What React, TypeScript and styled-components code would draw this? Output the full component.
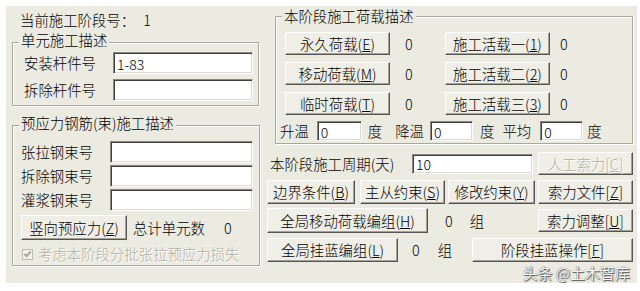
import React from "react";
import styled, { createGlobalStyle } from "styled-components";

const FACE = "#ecebe2";
const FONT = `"Noto Sans CJK SC", "Noto Sans", sans-serif`;

const GlobalStyle = createGlobalStyle`
  html, body {
    margin: 0;
    padding: 0;
    background: #fff;
  }
`;

const Dialog = styled.div`
  margin: 6px 3px 0 6px;
  width: 631px;
  height: 277px;
  background: ${FACE};
  display: flex;
  font-family: ${FONT};
  font-size: 14.4px;
  font-weight: 300;
  line-height: 16px;
  color: #000;
`;

const LeftCol = styled.div`
  width: 248px;
  margin-left: 6px;
  padding-top: 6px;
  display: flex;
  flex-direction: column;
`;

const RightCol = styled.div`
  width: 367px;
  margin-left: 6px;
  padding-top: 2px;
  display: flex;
  flex-direction: column;
`;

const StageLine = styled.div`
  height: 16px;
  margin-left: 8px;
  white-space: nowrap;
`;

const Group = styled.fieldset<{ $mt: number; $w: number; $ml?: number }>`
  box-sizing: border-box;
  width: ${(p) => p.$w}px;
  margin: ${(p) => p.$mt}px 0 0 ${(p) => p.$ml ?? 0}px;
  padding: 0;
  min-width: 0;
  border: 1px solid #aaa899;
  box-shadow: inset 1px 1px 0 #fff, 1px 1px 0 #fff;
`;

const Caption = styled.legend<{ $ml: number; $lift?: number }>`
  margin-left: ${(p) => p.$ml}px;
  padding: 0 2px ${(p) => p.$lift ?? 0}px;
  line-height: 16px;
  background: ${FACE};
  white-space: nowrap;
`;

const GroupBody = styled.div<{ $pad: string }>`
  padding: ${(p) => p.$pad};
  display: flex;
  flex-direction: column;
`;

const FieldRow = styled.div<{ $mt?: number }>`
  display: flex;
  align-items: center;
  height: 22px;
  margin-top: ${(p) => p.$mt ?? 0}px;
`;

const FieldLabel = styled.span<{ $w?: number }>`
  width: ${(p) => p.$w ?? 89}px;
  flex: none;
  white-space: nowrap;
`;

const TextBox = styled.input<{ $w: number; $h?: number; $ml?: number }>`
  box-sizing: border-box;
  width: ${(p) => p.$w}px;
  height: ${(p) => p.$h ?? 22}px;
  flex: none;
  margin: 0 0 0 ${(p) => p.$ml ?? 0}px;
  padding: 1px 3px 0;
  font-family: ${FONT};
  font-size: 14px;
  font-weight: 300;
  color: #000;
  background: #fff;
  border: 1px solid;
  border-color: #8a887c #fff #fff #8a887c;
  box-shadow: inset 1px 1px 0 #404040, inset -1px -1px 0 #dcdad0;
  outline: none;
`;

const Btn = styled.button<{ $w: number; $h?: number; $ml?: number | "auto" }>`
  box-sizing: border-box;
  width: ${(p) => p.$w}px;
  height: ${(p) => p.$h ?? 23}px;
  flex: none;
  margin: 0 0 0 ${(p) => (p.$ml === "auto" ? "auto" : `${p.$ml ?? 0}px`)};
  padding: 0;
  font-family: ${FONT};
  font-size: 14.4px;
  font-weight: 300;
  line-height: 16px;
  color: #000;
  background: #efeee7;
  border: 1px solid;
  border-color: #fff #555 #555 #fff;
  box-shadow: inset -1px -1px 0 #a3a194;
  white-space: nowrap;
  cursor: default;

  &:disabled {
    color: #b2b0a2;
    text-shadow: 1px 1px 0 #fff;
  }
`;

const Word = styled.span<{ $ml?: number; $gray?: boolean }>`
  margin-left: ${(p) => p.$ml ?? 0}px;
  flex: none;
  white-space: nowrap;
  color: ${(p) => (p.$gray ? "#b2b0a2" : "#000")};
  text-shadow: ${(p) => (p.$gray ? "1px 1px 0 #fff" : "none")};
`;

const ActionRow = styled.div<{ $mt: number; $h?: number; $ml?: number }>`
  display: flex;
  align-items: center;
  height: ${(p) => p.$h ?? 24}px;
  margin-top: ${(p) => p.$mt}px;
  margin-left: ${(p) => p.$ml ?? 0}px;
`;

const LoadGrid = styled.div`
  display: grid;
  grid-template-columns: 105px 55px 105px auto;
  grid-auto-rows: 23px;
  row-gap: 7px;
  align-items: center;
  margin-left: 5px;
`;

const Count = styled.span<{ $pl: number }>`
  padding-left: ${(p) => p.$pl}px;
`;

const CheckBox = styled.span`
  box-sizing: border-box;
  width: 11px;
  height: 11px;
  margin-left: 1px;
  flex: none;
  display: flex;
  border: 1px solid #bdbbad;
  background: #f3f2ec;
`;

const Watermark = styled.div`
  margin-top: 3px;
  padding-right: 3px;
  text-align: right;
  font-size: 15px;
  font-weight: 400;
  line-height: 16px;
  color: #f6f6f6;
  text-shadow: 0 0 1px #444, 1px 1px 1px #555;
  white-space: nowrap;
`;

const Key = ({ k, square }: { k: string; square?: boolean }) => (
  <>
    {square ? "[" : "("}
    <u>{k}</u>
    {square ? "]" : ")"}
  </>
);

const App = () => {
  return (
    <>
      <GlobalStyle />
      <Dialog>
        <LeftCol>
          <StageLine>
            当前施工阶段号：<Word $ml={8}>1</Word>
          </StageLine>

          <Group $mt={4} $w={247}>
            <Caption $ml={6} $lift={4}>
              单元施工描述
            </Caption>
            <GroupBody $pad="0 4px 4px 11px">
              <FieldRow>
                <FieldLabel>安装杆件号</FieldLabel>
                <TextBox $w={140} defaultValue="1-83" />
              </FieldRow>
              <FieldRow $mt={5}>
                <FieldLabel>拆除杆件号</FieldLabel>
                <TextBox $w={140} defaultValue="" />
              </FieldRow>
            </GroupBody>
          </Group>

          <Group $mt={9} $w={248}>
            <Caption $ml={6} $lift={4}>
              预应力钢筋(束)施工描述
            </Caption>
            <GroupBody $pad="6px 4px 4px 8px">
              <FieldRow>
                <FieldLabel>张拉钢束号</FieldLabel>
                <TextBox $w={143} defaultValue="" />
              </FieldRow>
              <FieldRow $mt={2}>
                <FieldLabel>拆除钢束号</FieldLabel>
                <TextBox $w={143} defaultValue="" />
              </FieldRow>
              <FieldRow $mt={2}>
                <FieldLabel>灌浆钢束号</FieldLabel>
                <TextBox $w={143} defaultValue="" />
              </FieldRow>
              <ActionRow $mt={4} $h={25}>
                <Btn $w={106} $h={25}>
                  竖向预应力<Key k="Z" />
                </Btn>
                <Word $ml={6}>总计单元数</Word>
                <Word $ml={19}>0</Word>
              </ActionRow>
              <ActionRow $mt={7} $h={14}>
                <CheckBox>
                  <svg width="9" height="9" viewBox="0 0 9 9">
                    <path
                      d="M1.5 4 L3.5 6.2 L7.8 1.5"
                      fill="none"
                      stroke="#a9a797"
                      strokeWidth="2"
                    />
                  </svg>
                </CheckBox>
                <Word $ml={5} $gray>
                  考虑本阶段分批张拉预应力损失
                </Word>
              </ActionRow>
            </GroupBody>
          </Group>
        </LeftCol>

        <RightCol>
          <Group $mt={0} $w={358} $ml={9}>
            <Caption $ml={6}>本阶段施工荷载描述</Caption>
            <GroupBody $pad="8px 0 2px 4px">
              <LoadGrid>
                <Btn $w={105}>
                  永久荷载<Key k="E" />
                </Btn>
                <Count $pl={15}>0</Count>
                <Btn $w={105}>
                  施工活载一<Key k="1" />
                </Btn>
                <Count $pl={10}>0</Count>

                <Btn $w={105}>
                  移动荷载<Key k="M" />
                </Btn>
                <Count $pl={15}>0</Count>
                <Btn $w={105}>
                  施工活载二<Key k="2" />
                </Btn>
                <Count $pl={10}>0</Count>

                <Btn $w={105}>
                  临时荷载<Key k="T" />
                </Btn>
                <Count $pl={15}>0</Count>
                <Btn $w={105}>
                  施工活载三<Key k="3" />
                </Btn>
                <Count $pl={10}>0</Count>
              </LoadGrid>

              <ActionRow $mt={6} $h={20}>
                <Word>升温</Word>
                <TextBox $w={45} $h={20} $ml={8} defaultValue="0" />
                <Word $ml={6}>度</Word>
                <Word $ml={13}>降温</Word>
                <TextBox $w={43} $h={20} $ml={6} defaultValue="0" />
                <Word $ml={7}>度</Word>
                <Word $ml={8}>平均</Word>
                <TextBox $w={43} $h={20} $ml={9} defaultValue="0" />
                <Word $ml={4}>度</Word>
              </ActionRow>
            </GroupBody>
          </Group>

          <ActionRow $mt={8} $h={23} $ml={4}>
            <FieldLabel $w={142}>本阶段施工周期(天)</FieldLabel>
            <TextBox $w={121} $h={20} defaultValue="10" />
            <Btn $w={95} $ml={5} disabled>
              人工索力<Key k="C" square />
            </Btn>
          </ActionRow>

          <ActionRow $mt={5} $ml={1}>
            <Btn $w={88} $h={24}>
              边界条件<Key k="B" />
            </Btn>
            <Btn $w={85} $h={24} $ml={5}>
              主从约束<Key k="S" />
            </Btn>
            <Btn $w={87} $h={24} $ml={3}>
              修改约束<Key k="Y" />
            </Btn>
            <Btn $w={95} $h={24} $ml={3}>
              索力文件<Key k="Z" square />
            </Btn>
          </ActionRow>

          <ActionRow $mt={4} $h={25} $ml={1}>
            <Btn $w={161} $h={25}>
              全局移动荷载编组<Key k="H" />
            </Btn>
            <Word $ml={17}>0</Word>
            <Word $ml={17}>组</Word>
            <Btn $w={95} $ml="auto">
              索力调整<Key k="U" square />
            </Btn>
          </ActionRow>

          <ActionRow $mt={5} $ml={1}>
            <Btn $w={131} $h={24}>
              全局挂蓝编组<Key k="L" />
            </Btn>
            <Word $ml={14}>0</Word>
            <Word $ml={18}>组</Word>
            <Btn $w={161} $h={24} $ml="auto">
              阶段挂蓝操作<Key k="F" square />
            </Btn>
          </ActionRow>

          <Watermark>头条 @土木智库</Watermark>
        </RightCol>
      </Dialog>
    </>
  );
};

export default App;
